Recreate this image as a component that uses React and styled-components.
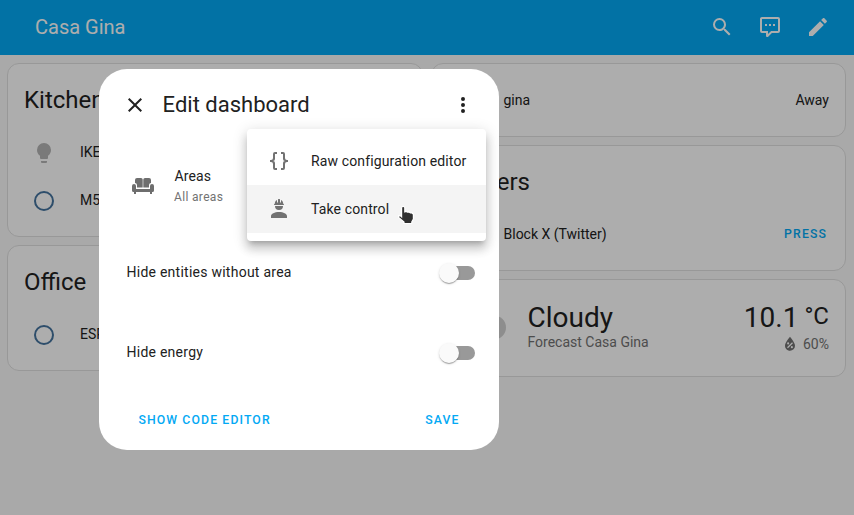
import React from 'react';
import styled, { createGlobalStyle } from 'styled-components';

const GlobalStyle = createGlobalStyle`
  * { box-sizing: border-box; }
  body {
    margin: 0;
    overflow: hidden;
    background: #fafafa;
    color: #212121;
    font: 14px/20px Roboto, sans-serif;
  }
`;

const ICONS = {
  search: 'M9.5,3A6.5,6.5 0 0,1 16,9.5C16,11.11 15.41,12.59 14.44,13.73L14.71,14H15.5L20.5,19L19,20.5L14,15.5V14.71L13.73,14.44C12.59,15.41 11.11,16 9.5,16A6.5,6.5 0 0,1 3,9.5A6.5,6.5 0 0,1 9.5,3M9.5,5C7,5 5,7 5,9.5C5,12 7,14 9.5,14C12,14 14,12 14,9.5C14,7 12,5 9.5,5Z',
  comment: 'M9,22A1,1 0 0,1 8,21V18H4A2,2 0 0,1 2,16V4C2,2.89 2.9,2 4,2H20A2,2 0 0,1 22,4V16A2,2 0 0,1 20,18H13.9L10.2,21.71C10,21.9 9.75,22 9.5,22V22H9M10,16V19.08L13.08,16H20V4H4V16H10M17,11H15V9H17V11M13,11H11V9H13V11M9,11H7V9H9V11Z',
  pencil: 'M20.71,7.04C21.1,6.65 21.1,6 20.71,5.63L18.37,3.29C18,2.9 17.35,2.9 16.96,3.29L15.12,5.12L18.87,8.87M3,17.25V21H6.75L17.81,9.93L14.06,6.18L3,17.25Z',
  close: 'M19,6.41L17.59,5L12,10.59L6.41,5L5,6.41L10.59,12L5,17.59L6.41,19L12,13.41L17.59,19L19,17.59L13.41,12L19,6.41Z',
  dots: 'M12,16A2,2 0 0,1 14,18A2,2 0 0,1 12,20A2,2 0 0,1 10,18A2,2 0 0,1 12,16M12,10A2,2 0 0,1 14,12A2,2 0 0,1 12,14A2,2 0 0,1 10,12A2,2 0 0,1 12,10M12,4A2,2 0 0,1 14,6A2,2 0 0,1 12,8A2,2 0 0,1 10,6A2,2 0 0,1 12,4Z',
  bulb: 'M12,2A7,7 0 0,0 5,9C5,11.38 6.19,13.47 8,14.74V17A1,1 0 0,0 9,18H15A1,1 0 0,0 16,17V14.74C17.81,13.47 19,11.38 19,9A7,7 0 0,0 12,2M9,21A1,1 0 0,0 10,22H14A1,1 0 0,0 15,21V20H9V21Z',
  circle: 'M12,20A8,8 0 0,1 4,12A8,8 0 0,1 12,4A8,8 0 0,1 20,12A8,8 0 0,1 12,20M12,2A10,10 0 0,0 2,12A10,10 0 0,0 12,22A10,10 0 0,0 22,12A10,10 0 0,0 12,2Z',
  braces: 'M8,3A2,2 0 0,0 6,5V9A2,2 0 0,1 4,11H3V13H4A2,2 0 0,1 6,15V19A2,2 0 0,0 8,21H10V19H8V14A2,2 0 0,0 6,12A2,2 0 0,0 8,10V5H10V3M16,3A2,2 0 0,1 18,5V9A2,2 0 0,0 20,11H21V13H20A2,2 0 0,0 18,15V19A2,2 0 0,1 16,21H14V19H16V14A2,2 0 0,1 18,12A2,2 0 0,1 16,10V5H14V3H16Z',
  hardHat: 'M12,15C7.58,15 4,16.79 4,19V21H20V19C20,16.79 16.42,15 12,15M8,9A4,4 0 0,0 12,13A4,4 0 0,0 16,9M11.5,2C11.2,2 11,2.21 11,2.5V5.5H10V3C10,3 7.75,3.86 7.75,6.75C7.75,6.75 7,6.89 7,8H17C16.95,6.89 16.25,6.75 16.25,6.75C16.25,3.86 14,3 14,3V5.5H13V2.5C13,2.21 12.81,2 12.5,2H11.5Z',
  drop: 'M12,3.25C12,3.25 6,10 6,14C6,17.32 8.69,20 12,20A6,6 0 0,0 18,14C18,10 12,3.25 12,3.25M14.47,9.97L15.53,11.03L9.53,17.03L8.47,15.97M9.75,10A1.25,1.25 0 0,1 11,11.25A1.25,1.25 0 0,1 9.75,12.5A1.25,1.25 0 0,1 8.5,11.25A1.25,1.25 0 0,1 9.75,10M14.25,14.5A1.25,1.25 0 0,1 15.5,15.75A1.25,1.25 0 0,1 14.25,17A1.25,1.25 0 0,1 13,15.75A1.25,1.25 0 0,1 14.25,14.5Z',
  sofa: 'M6,4H10Q11.7,4 11.7,5.5V13.5H6V11Q5.8,9.2 4,9V6Q4,4 6,4M14,4H18Q20,4 20,6V9Q18.2,9.2 18,11V13.5H12.3V5.5Q12.3,4 14,4M3,10A2,2 0 0,1 5,12V15H19V12A2,2 0 0,1 23,12V16.5Q23,18 21.5,18H21V20H19V18H5V20H3V18H2.5Q1,18 1,16.5V12A2,2 0 0,1 3,10Z',
};

const Svg = styled.svg`
  display: block;
  flex: none;
  fill: currentColor;
`;
const Icon = ({ name, size = 24 }) => (
  <Svg width={size} height={size} viewBox="0 0 24 24"><path d={ICONS[name]} /></Svg>
);

const Toolbar = styled.header`
  display: flex;
  align-items: center;
  height: 55px;
  padding: 0 12px 1px 35px;
  background: #03a9f4;
  color: #fff;
`;
const ToolbarTitle = styled.div`
  flex: 1;
  font-size: 20px;
`;
const IconButton = styled.button`
  display: grid;
  place-items: center;
  width: 48px;
  height: 48px;
  padding: 0;
  border: 0;
  background: none;
  color: inherit;
`;

const Board = styled.main`
  display: grid;
  grid-template-columns: 1fr 1fr;
  gap: 8px;
  height: 460px;
  padding: 8px 8px 0 7px;
`;
const Column = styled.div`
  display: flex;
  flex-direction: column;
  gap: 8px;
`;
const Card = styled.section`
  padding: ${(p) => (p.$titled ? '12px' : '16px')} 16px 16px;
  border: 1px solid #e0e0e0;
  border-radius: 12px;
  background: #fff;
`;
const CardTitle = styled.h1`
  margin: 0 0 8px;
  font-size: 24px;
  font-weight: 400;
  line-height: 48px;
`;
const EntityRow = styled.div`
  display: flex;
  align-items: center;
  height: 40px;

  & + & { margin-top: 8px; }
`;
const StateIcon = styled.div`
  display: grid;
  place-items: center;
  width: 40px;
  height: 40px;
  margin-right: 16px;
  padding-top: 2px;
  color: ${(p) => (p.$muted ? '#b4b4b4' : '#44739e')};
`;
const EntityName = styled.div`
  flex: 1;
`;
const TextButton = styled.button`
  padding: 0;
  border: 0;
  background: none;
  color: #03a9f4;
  font: 500 12.25px/36px Roboto, sans-serif;
  letter-spacing: 1.12px;
  text-transform: uppercase;
`;
const RowButton = styled(TextButton)`
  margin-right: 2px;
`;

const Entity = ({ icon, muted, name, children }) => (
  <EntityRow>
    <StateIcon $muted={muted}>{icon && <Icon name={icon} />}</StateIcon>
    <EntityName>{name}</EntityName>
    {children}
  </EntityRow>
);

const Weather = styled.div`
  display: flex;
  align-items: center;
  height: 64px;
`;
const WeatherInfo = styled.div`
  flex: 1;
  padding: 0 0 1px 16px;
`;
const Condition = styled.div`
  font-size: 28px;
  line-height: 30px;
`;
const Secondary = styled.div`
  margin-top: -1px;
  margin-bottom: 1px;
  color: #727272;
`;
const Reading = styled.div`
  display: flex;
  flex-direction: column;
  align-items: flex-end;
  padding-top: 1px;
`;
const Temperature = styled.div`
  display: flex;
  gap: 6px;
  font-size: 28px;
  line-height: 30px;
`;
const Unit = styled.span`
  font-size: 24px;
  line-height: 27px;
`;
const Humidity = styled.div`
  display: flex;
  align-items: center;
  gap: 3px;
  margin: 1px 0;
  color: #727272;
`;

const Scrim = styled.div`
  position: fixed;
  inset: 0;
  padding: 69px 0 0 99px;
  background: rgba(0, 0, 0, 0.32);
`;
const Dialog = styled.div`
  width: 400px;
  height: 381px;
  border-radius: 28px;
  background: #fff;
`;
const DialogHeader = styled.div`
  display: flex;
  align-items: center;
  height: 81px;
  padding: 12px 12px 21px;
`;
const DialogTitle = styled.h2`
  flex: 1;
  margin: 0 0 1px 3.6px;
  font-size: 22px;
  font-weight: 400;
`;
const MenuAnchor = styled.div`
  position: relative;
`;
const Menu = styled.div`
  position: absolute;
  top: 48px;
  right: 1px;
  width: 239px;
  padding: 8px 0;
  border-radius: 4px;
  background: #fff;
  box-shadow: 0 5px 5px -3px rgba(0, 0, 0, 0.2), 0 8px 10px 1px rgba(0, 0, 0, 0.14), 0 3px 14px 2px rgba(0, 0, 0, 0.12);
`;
const MenuItem = styled.div`
  position: relative;
  display: flex;
  align-items: center;
  gap: 20px;
  height: 48px;
  padding-left: 20px;
  background: ${(p) => (p.$active ? '#f4f4f4' : 'transparent')};
  letter-spacing: 0.13px;
  white-space: nowrap;

  svg { color: #727272; }
`;
const Pointer = styled.div`
  position: absolute;
  left: 150px;
  top: 20px;
`;

const AreasRow = styled.div`
  display: flex;
  align-items: center;
  gap: 19.5px;
  height: 72px;
  margin-bottom: 10px;
  padding-left: 32px;
  letter-spacing: 0.13px;

  svg { color: #6e6e6e; }
`;
const AreasHint = styled.div`
  margin: 1px 0 -1px -0.5px;
  color: #727272;
  font-size: 12px;
  line-height: 21px;
  letter-spacing: 0.34px;
`;
const SettingRow = styled.div`
  display: flex;
  align-items: center;
  justify-content: space-between;
  height: 80px;
  padding: 0 24px 0 27.5px;
  letter-spacing: 0.25px;
`;
const Track = styled.div`
  display: flex;
  align-items: center;
  width: 32px;
  height: 14px;
  margin-top: 2px;
  border-radius: 7px;
  background: #999;
`;
const Thumb = styled.div`
  width: 20px;
  height: 20px;
  margin-left: -4px;
  border-radius: 50%;
  background: #fafafa;
  box-shadow: 0 2px 1px -1px rgba(0, 0, 0, 0.2), 0 1px 1px rgba(0, 0, 0, 0.14), 0 1px 3px rgba(0, 0, 0, 0.12);
`;
const Actions = styled.div`
  display: flex;
  align-items: center;
  justify-content: space-between;
  height: 55px;
  padding: 0 39.4px;
`;

const Setting = ({ label }) => (
  <SettingRow>
    {label}
    <Track><Thumb /></Track>
  </SettingRow>
);

export default function App() {
  return (
    <>
      <GlobalStyle />
      <Toolbar>
        <ToolbarTitle>Casa Gina</ToolbarTitle>
        <IconButton><Icon name="search" /></IconButton>
        <IconButton><Icon name="comment" /></IconButton>
        <IconButton><Icon name="pencil" /></IconButton>
      </Toolbar>
      <Board>
        <Column>
          <Card $titled>
            <CardTitle>Kitchen</CardTitle>
            <Entity icon="bulb" muted name="IKEA" />
            <Entity icon="circle" name="M5" />
          </Card>
          <Card $titled>
            <CardTitle>Office</CardTitle>
            <Entity icon="circle" name="ESP" />
          </Card>
        </Column>
        <Column>
          <Card>
            <Entity name="gina">Away</Entity>
          </Card>
          <Card $titled>
            <CardTitle>Helpers</CardTitle>
            <Entity name="Block X (Twitter)"><RowButton>Press</RowButton></Entity>
          </Card>
          <Card>
            <Weather>
              <Svg width="64" height="64" viewBox="0 0 64 64">
                <g fill="#d0d0d0">
                  <circle cx="46" cy="31.5" r="12" />
                  <circle cx="27" cy="25" r="15" />
                  <rect x="6" y="24" width="40" height="19.5" rx="9" />
                </g>
              </Svg>
              <WeatherInfo>
                <Condition>Cloudy</Condition>
                <Secondary>Forecast Casa Gina</Secondary>
              </WeatherInfo>
              <Reading>
                <Temperature>10.1<Unit>°C</Unit></Temperature>
                <Humidity><Icon name="drop" size={20} />60%</Humidity>
              </Reading>
            </Weather>
          </Card>
        </Column>
      </Board>
      <Scrim>
        <Dialog>
          <DialogHeader>
            <IconButton><Icon name="close" /></IconButton>
            <DialogTitle>Edit dashboard</DialogTitle>
            <MenuAnchor>
              <IconButton><Icon name="dots" /></IconButton>
              <Menu>
                <MenuItem><Icon name="braces" />Raw configuration editor</MenuItem>
                <MenuItem $active>
                  <Icon name="hardHat" />Take control
                  <Pointer>
                    <Svg width="18" height="20" viewBox="0 0 18 20">
                      <path
                        d="M4.6,2.8C4.6,.8 7.8,.8 7.8,2.8V6.8L9,6.4L10.6,7.2L12,6.9L13.4,7.8L14.8,7.7L16.4,9.2V14L14.8,17V18.5H7V17L1.6,12.4V10.9H3.6L4.6,11.8Z"
                        fill="#303030"
                        stroke="#fff"
                        strokeWidth="1.2"
                      />
                    </Svg>
                  </Pointer>
                </MenuItem>
              </Menu>
            </MenuAnchor>
          </DialogHeader>
          <AreasRow>
            <Icon name="sofa" />
            <div>
              Areas
              <AreasHint>All areas</AreasHint>
            </div>
          </AreasRow>
          <Setting label="Hide entities without area" />
          <Setting label="Hide energy" />
          <Actions>
            <TextButton>Show code editor</TextButton>
            <TextButton>Save</TextButton>
          </Actions>
        </Dialog>
      </Scrim>
    </>
  );
}
